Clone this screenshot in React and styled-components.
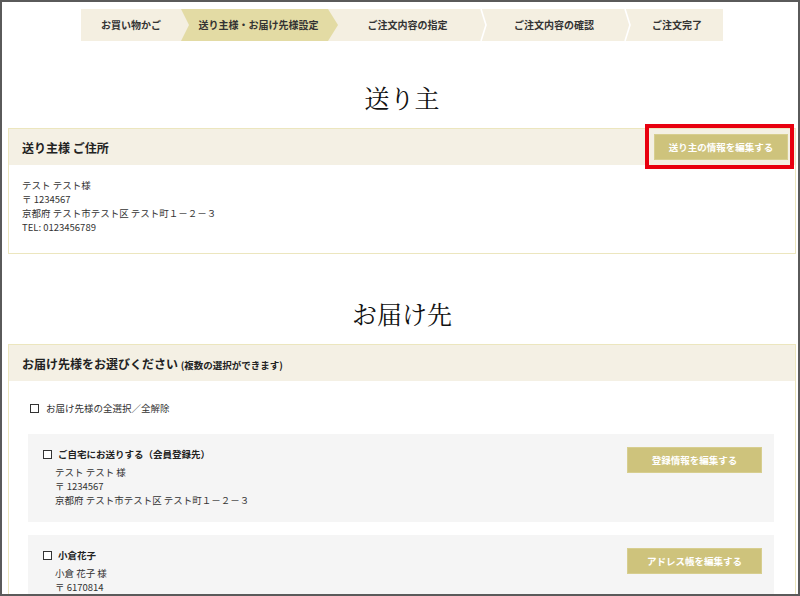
import React from 'react'
import styled, { createGlobalStyle } from 'styled-components'

const GlobalStyle = createGlobalStyle`
  html, body { margin: 0; padding: 0; background: #fff; }
  body {
    font-family: "Noto Sans CJK JP", "Noto Sans", sans-serif;
    color: #333;
  }
  * { box-sizing: border-box; }
`;

const BEIGE = '#f4efe1';
const ACTIVE = '#e3dba4';

const steps = [
  { label: 'お買い物かご', w: 100 },
  { sep: 'into', w: 8 },
  { label: '送り主様・お届け先様設定', w: 139, active: true },
  { sep: 'out', w: 10 },
  { label: 'ご注文内容の指定', w: 139 },
  { sep: 'line', w: 10 },
  { label: 'ご注文内容の確認', w: 134 },
  { sep: 'line', w: 10 },
  { label: 'ご注文完了', w: 92 },
];

function Sep({ type, w }) {
  return (
    <SepSvg width={w} height="32" viewBox={`0 0 ${w} 32`} preserveAspectRatio="none" $bg={type === 'into' ? ACTIVE : BEIGE}>
      {type === 'into' && <polygon points="0,0 8,16 0,32" fill={BEIGE} />}
      {type === 'out' && <polygon points="0,0 10,16 0,32" fill={ACTIVE} />}
      {type === 'line' && <polyline points="4,0 9,16 4,32" fill="none" stroke="#fff" strokeWidth="1.6" />}
    </SepSvg>
  );
}

function Checkbox() {
  return <Box />;
}

export default function App() {
  return (
    <>
      <GlobalStyle />
      <Frame>
        <Stepper>
          {steps.map((s, i) =>
            s.sep ? (
              <Sep key={i} type={s.sep} w={s.w} />
            ) : (
              <Step key={i} $w={s.w} $active={s.active}>{s.label}</Step>
            )
          )}
        </Stepper>

        <Title $top={38}>送り主</Title>
        <Panel>
          <PanelHead>
            <HeadText>送り主様 ご住所</HeadText>
            <Marked>
              <Button $w={134}>送り主の情報を編集する</Button>
              <RedMark />
            </Marked>
          </PanelHead>
          <PanelBody>
            <Line>テスト テスト様</Line>
            <Line>〒 1234567</Line>
            <Line>京都府 テスト市テスト区 テスト町１－２－３</Line>
            <Line>TEL: 0123456789</Line>
          </PanelBody>
        </Panel>

        <Title $top={41}>お届け先</Title>
        <Panel>
          <PanelHead>
            <HeadText>
              お届け先様をお選びください <Small>(複数の選択ができます)</Small>
            </HeadText>
          </PanelHead>
          <DestBody>
            <CheckAll>
              <Checkbox />
              <span>お届け先様の全選択／全解除</span>
            </CheckAll>

            <Card>
              <CardInfo>
                <CardTitle>
                  <Checkbox />
                  <span>ご自宅にお送りする（会員登録先）</span>
                </CardTitle>
                <CardLines>
                  <Line>テスト テスト 様</Line>
                  <Line>〒 1234567</Line>
                  <Line>京都府 テスト市テスト区 テスト町１－２－３</Line>
                </CardLines>
              </CardInfo>
              <Button $w={135}>登録情報を編集する</Button>
            </Card>

            <Card>
              <CardInfo>
                <CardTitle>
                  <Checkbox />
                  <span>小倉花子</span>
                </CardTitle>
                <CardLines>
                  <Line>小倉 花子 様</Line>
                  <Line>〒 6170814</Line>
                </CardLines>
              </CardInfo>
              <Button $w={135}>アドレス帳を編集する</Button>
            </Card>
          </DestBody>
        </Panel>
      </Frame>
    </>
  );
}

const Frame = styled.div`
  height: 596px;
  border: 2px solid #5a5a5a;
  overflow: hidden;
  padding: 0 2px 0 6px;
`;

const Stepper = styled.div`
  display: flex;
  width: 642px;
  height: 32px;
  margin: 7px auto 0;
  background: ${BEIGE};
`;

const Step = styled.div`
  flex: 0 0 ${p => p.$w}px;
  height: 32px;
  line-height: 32px;
  text-align: center;
  font-size: 10px;
  font-weight: 700;
  color: #333;
  white-space: nowrap;
  background: ${p => (p.$active ? ACTIVE : BEIGE)};
`;

const SepSvg = styled.svg`
  display: block;
  flex: 0 0 auto;
  background: ${p => p.$bg};
`;

const Title = styled.h2`
  margin: ${p => p.$top}px 0 13px;
  height: 36px;
  line-height: 36px;
  text-align: center;
  font-family: "Noto Serif CJK JP", "Noto Sans CJK JP", serif;
  font-size: 25px;
  font-weight: 400;
  color: #111;
`;

const Panel = styled.section`
  border: 1px solid #ece6be;
`;

const PanelHead = styled.div`
  display: flex;
  align-items: center;
  justify-content: space-between;
  height: 36px;
  padding: 0 7px 0 13px;
  background: #f4f0e4;
`;

const HeadText = styled.h3`
  margin: 0;
  font-size: 12px;
  font-weight: 700;
  color: #222;
`;

const Small = styled.span`
  font-size: 9.5px;
`;

const Marked = styled.div`
  position: relative;
  display: flex;
`;

const RedMark = styled.div`
  position: absolute;
  top: -10px;
  left: -9px;
  right: -6px;
  bottom: -9px;
  border: 4px solid #e8000f;
  pointer-events: none;
`;

const Button = styled.button`
  width: ${p => p.$w}px;
  height: 26px;
  padding: 0;
  border: 1px solid #d7ce8f;
  background: #cec37c;
  color: #fff;
  font-family: inherit;
  font-size: 9.5px;
  font-weight: 700;
  cursor: pointer;
  flex: 0 0 auto;
`;

const PanelBody = styled.div`
  padding: 13px 13px 19px;
`;

const Line = styled.div`
  font-size: 9.5px;
  line-height: 14px;
  color: #333;
  white-space: nowrap;
`;

const DestBody = styled.div`
  padding: 20px 21px 0 19px;
  display: flex;
  flex-direction: column;
  gap: 13px;
`;

const CheckAll = styled.label`
  display: flex;
  align-items: center;
  gap: 7px;
  margin: 0 0 6px 2px;
  font-size: 9.5px;
  line-height: 14px;
  color: #333;
`;

const Box = styled.span`
  display: inline-block;
  width: 9px;
  height: 9px;
  border: 1.5px solid #333;
  background: #fff;
  flex: 0 0 auto;
`;

const Card = styled.div`
  display: flex;
  justify-content: space-between;
  align-items: flex-start;
  padding: 13px 12px 15px 15px;
  background: #f5f5f5;
`;

const CardInfo = styled.div`
  display: flex;
  flex-direction: column;
`;

const CardTitle = styled.label`
  display: flex;
  align-items: center;
  gap: 6px;
  font-size: 9.5px;
  font-weight: 700;
  line-height: 14px;
  color: #222;
  margin-bottom: 4px;
`;

const CardLines = styled.div`
  margin-left: 12px;
`;
